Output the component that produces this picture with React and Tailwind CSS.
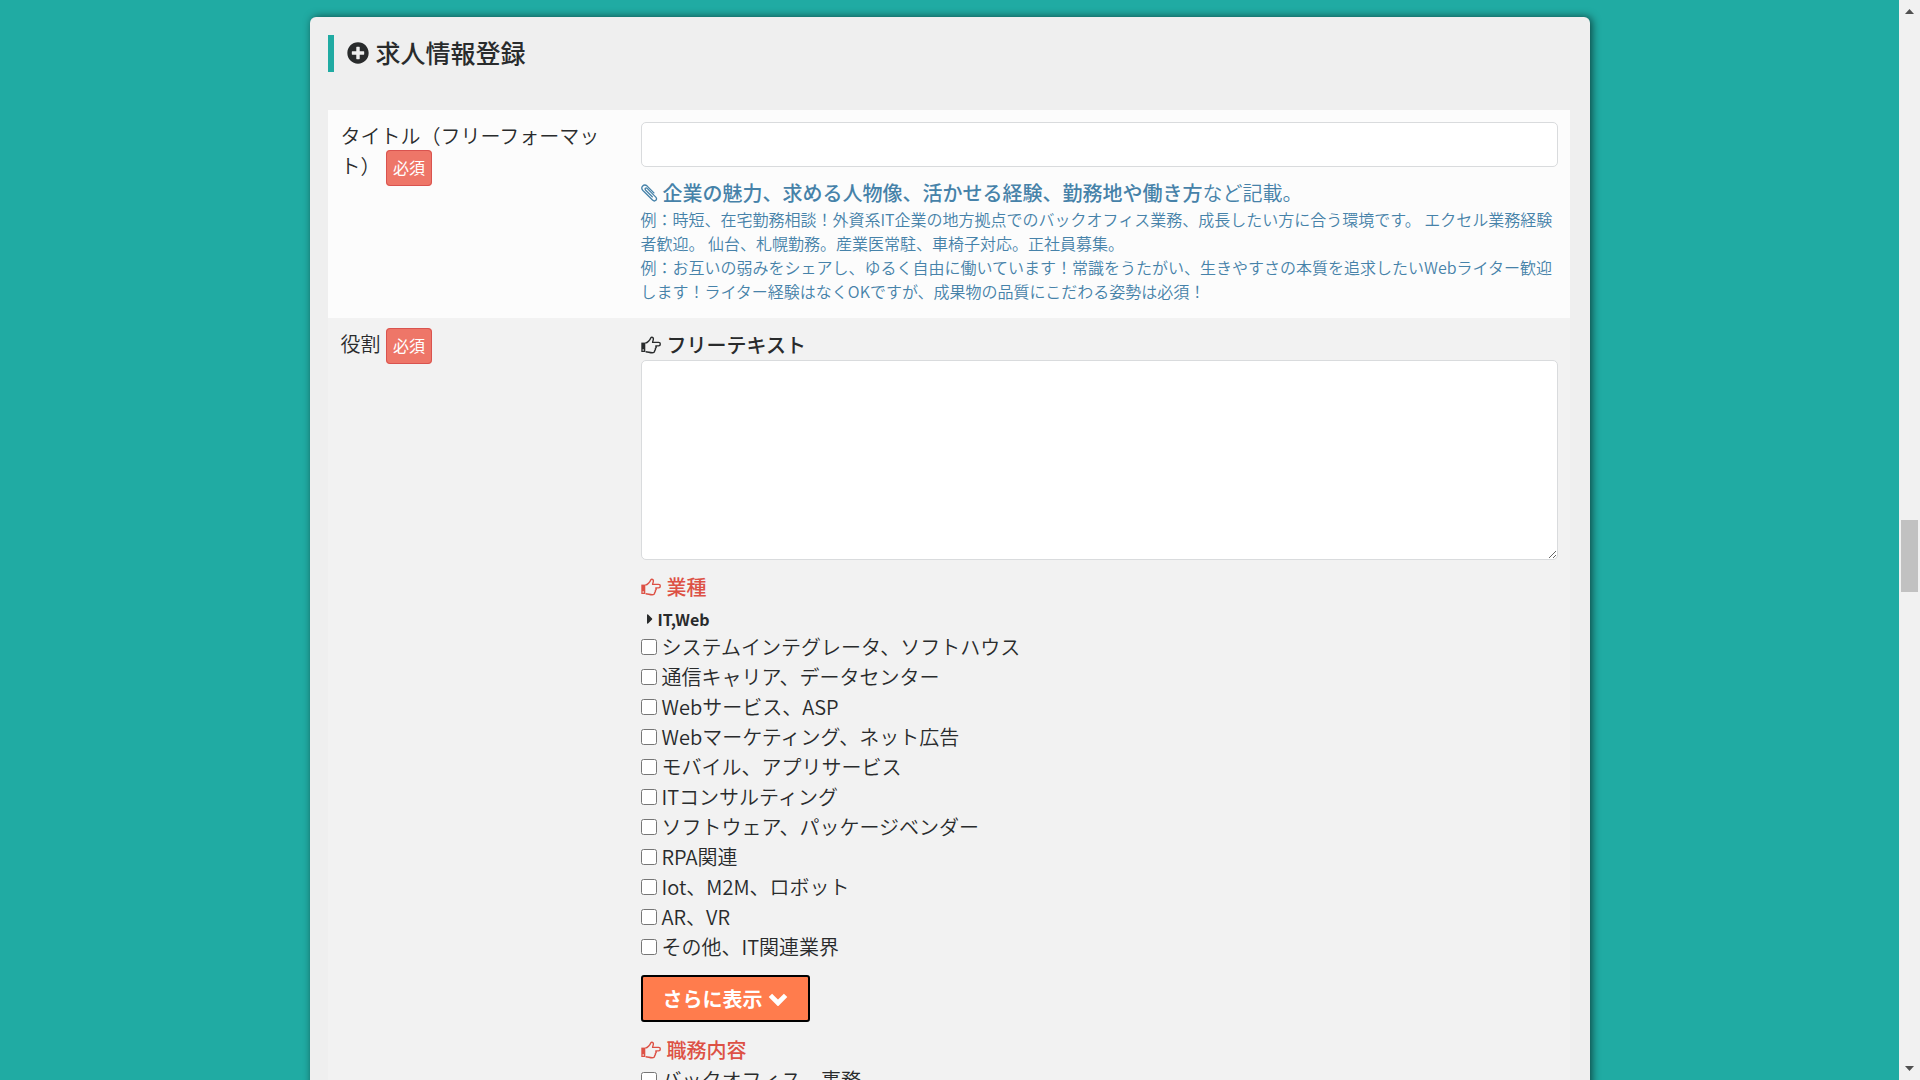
// src/App.jsx
import { FaPlusCircle, FaCaretRight } from "react-icons/fa";

const industries = [
  "システムインテグレータ、ソフトハウス",
  "通信キャリア、データセンター",
  "Webサービス、ASP",
  "Webマーケティング、ネット広告",
  "モバイル、アプリサービス",
  "ITコンサルティング",
  "ソフトウェア、パッケージベンダー",
  "RPA関連",
  "Iot、M2M、ロボット",
  "AR、VR",
  "その他、IT関連業界",
];

const jobs = ["バックオフィス、事務", "営業、企画"];

function HandIcon() {
  return (
    <svg viewBox="0 0 20 18" className="w-5 h-[18px] shrink-0" fill="none" stroke="currentColor" aria-hidden="true">
      <path d="M0.3 6.6h4v9.4H0.3z" fill="currentColor" stroke="none" />
      <circle cx="2.2" cy="14" r="0.8" className="fill-[#f2f2f2]" stroke="none" />
      <path
        d="M4.3 7c2.2 0 2.9-1.5 4.300-2.900 1-1 .9-2.900 2-2.900 1.500 0 2 1.200 1.700 2.500-.2 1-.7 1.900-.7 2.700h6c1.100 0 1.700.8 1.700 1.700 0 1-.7 1.800-1.700 1.800h-2.800c.6 1 .4 2-.4 2.500.3 1-.1 1.800-.8 2.300.1 1.500-.8 2-2.400 2-2.800 0-3.800-1-6.600-1"
        strokeWidth="1.4"
        strokeLinejoin="round"
      />
    </svg>
  );
}

function ClipIcon() {
  return (
    <svg viewBox="0 0 17 18" className="w-[17px] h-[18px] shrink-0" fill="none" stroke="currentColor" aria-hidden="true">
      <path
        d="M11.3 12.8 4.7 6.2c-1.4-1.5.2-3.1 1.7-1.6l8.4 8.5c2.2 2.4-.9 5.2-3.300 2.900L1.900 6.500C-1 3.300 2.900-.9 6.200 2.100l6.700 6.800"
        strokeWidth="1.3"
        strokeLinecap="round"
        strokeLinejoin="round"
      />
    </svg>
  );
}

function ChevronIcon() {
  return (
    <svg viewBox="0 0 20 14" className="w-5 h-[14px]" fill="none" stroke="currentColor" aria-hidden="true">
      <path d="M2.4 3.4 10 11l7.6-7.6" strokeWidth="4.8" />
    </svg>
  );
}

function Required() {
  return (
    <span className="ml-px rounded border border-[#d9534f] bg-[#ee7668] px-[6px] pt-1 pb-[6px] text-base font-normal text-white">
      必須
    </span>
  );
}

function GroupTitle({ children }) {
  return (
    <h3 className="flex items-center gap-[6px] font-medium text-[#dd5145]">
      <HandIcon />
      {children}
    </h3>
  );
}

function CheckList({ items }) {
  return (
    <ul>
      {items.map((item) => (
        <li key={item}>
          <label className="flex items-center gap-[5px]">
            <input type="checkbox" className="w-4 h-4 shrink-0" />
            {item}
          </label>
        </li>
      ))}
    </ul>
  );
}

function FormRow({ label, htmlFor, className, children }) {
  return (
    <div className={`flex ${className}`}>
      <div className="w-[300px] shrink-0 pl-[13px] pr-7 pt-[11px]">
        <label htmlFor={htmlFor}>{label}</label> <Required />
      </div>
      <div className="flex-1 pl-[13px] pr-3 pt-3 pb-[14px]">{children}</div>
    </div>
  );
}

// Always visible scrollbar on the right edge
function ScrollTrack() {
  return (
    <div className="w-[21px] shrink-0 flex flex-col items-center justify-between bg-[#f1f1f1] pt-[9px] pb-[9px]">
      <svg viewBox="0 0 9 5" className="w-[9px] h-[5px]" fill="#505050" aria-hidden="true">
        <path d="M4.5 0 9 5H0z" />
      </svg>
      <div className="w-[17px] h-[72px] bg-[#c1c1c1] mt-[32px]" />
      <svg viewBox="0 0 9 5" className="w-[9px] h-[5px]" fill="#505050" aria-hidden="true">
        <path d="M0 0h9L4.5 5z" />
      </svg>
    </div>
  );
}

export default function App() {
  return (
    <div className="flex h-screen overflow-hidden bg-[#20aba3] font-['Noto_Sans_CJK_JP',sans-serif] text-[20px] leading-[30px] font-[350] text-[#292b2c]">
      <main className="flex-1 overflow-hidden pt-[17px]">
        <section className="mx-auto w-full max-w-[1280px] min-h-screen rounded-md bg-[#efefef] px-[18px] pt-[18px] pb-10 shadow-[2px_0_8px_rgba(0,0,0,0.6)]">
          <h2 className="flex items-center gap-[7px] border-l-6 border-[#20aba3] pl-[13px] pb-[2px] text-[25px] leading-[35px] font-medium">
            <FaPlusCircle className="w-[22px] h-[22px]" />
            求人情報登録
          </h2>

          <form className="mt-[38px] pr-[2px]">
            <FormRow label="タイトル（フリーフォーマット）" htmlFor="title" className="bg-[#fcfcfc]">
              <input id="title" type="text" className="block w-full h-[45px] rounded-[5px] border border-[#d9dbdd] bg-white px-3" />
              <div className="mt-[11px] text-[#4682a9]">
                <div className="flex items-center gap-[5px]">
                  <ClipIcon />
                  <p>
                    <strong className="font-medium">企業の魅力、求める人物像、活かせる経験、勤務地や働き方</strong>など記載。
                  </p>
                </div>
                <p className="-mt-px pb-px text-base">
                  例：時短、在宅勤務相談！外資系IT企業の地方拠点でのバックオフィス業務、成長したい方に合う環境です。 エクセル業務経験者歓迎。 仙台、札幌勤務。産業医常駐、車椅子対応。正社員募集。
                  <br />
                  例：お互いの弱みをシェアし、ゆるく自由に働いています！常識をうたがい、生きやすさの本質を追求したいWebライター歓迎します！ライター経験はなくOKですが、成果物の品質にこだわる姿勢は必須！
                </p>
              </div>
            </FormRow>

            <FormRow label="役割" htmlFor="role" className="bg-[#f2f2f2]">
              <label htmlFor="role" className="flex items-center gap-[6px] font-medium">
                <HandIcon />
                フリーテキスト
              </label>
              <textarea id="role" className="block w-full h-[200px] rounded-[5px] border border-[#d9dbdd] bg-white px-3 py-2 mb-3" />

              <GroupTitle>業種</GroupTitle>
              <h4 className="flex items-center gap-[5px] mt-[5px] mb-px pl-[6px] text-base font-bold">
                <FaCaretRight className="w-[6px] h-4" />
                IT,Web
              </h4>
              <CheckList items={industries} />

              <button
                type="button"
                className="flex items-center gap-[5px] h-[47px] mt-[13px] mb-[13px] rounded-[3px] border-2 border-black bg-[#ff7c4d] px-5 font-bold text-white"
              >
                さらに表示
                <ChevronIcon />
              </button>

              <GroupTitle>職務内容</GroupTitle>
              <CheckList items={jobs} />
            </FormRow>
          </form>
        </section>
      </main>
      <ScrollTrack />
    </div>
  );
}
